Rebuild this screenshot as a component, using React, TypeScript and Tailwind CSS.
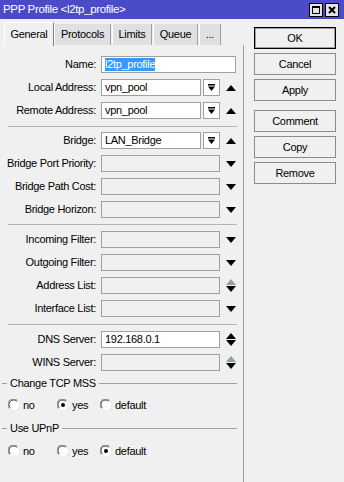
import React from "react";

const F = "font-['Liberation_Sans',Arial,sans-serif]";

function DropBtn() {
  return (
    <div className="w-[17px] h-[17px] ml-[2px] border border-[#a0a0a0] bg-white flex items-center justify-center shrink-0">
      <svg width="9" height="9" viewBox="0 0 9 9">
        <rect x="1" y="1" width="7" height="1.5" fill="#000" />
        <polygon points="1,3.5 8,3.5 4.5,8" fill="#000" />
      </svg>
    </div>
  );
}

function Up({ color = "#000" }: { color?: string }) {
  return (
    <svg width="10" height="6" viewBox="0 0 10 6">
      <polygon points="5,0 10,6 0,6" fill={color} />
    </svg>
  );
}
function Down({ color = "#000" }: { color?: string }) {
  return (
    <svg width="10" height="6" viewBox="0 0 10 6">
      <polygon points="0,0 10,0 5,6" fill={color} />
    </svg>
  );
}

function ArrowCell({ kind }: { kind: "up" | "down" | "updown" | "grayup" | "none" }) {
  return (
    <div className="w-[19px] h-[17px] flex flex-col items-center justify-center shrink-0 ml-[1px]">
      {kind === "up" && <Up />}
      {kind === "down" && <Down />}
      {kind === "updown" && (
        <div className="flex flex-col gap-[1px]">
          <Up />
          <Down />
        </div>
      )}
      {kind === "grayup" && (
        <div className="flex flex-col gap-[1px]">
          <Up color="#98a298" />
          <Down />
        </div>
      )}
    </div>
  );
}

function Row({ label, children }: { label: string; children: React.ReactNode }) {
  return (
    <div className="flex items-center h-[23px]">
      <div className="w-[97px] text-right whitespace-nowrap text-black shrink-0 pr-[1px]">{label}</div>
      <div className="ml-[4px] flex items-center">{children}</div>
    </div>
  );
}

function Input({ value, w, disabled, selected }: { value?: string; w: number; disabled?: boolean; selected?: boolean }) {
  return (
    <div
      className={
        "h-[17px] border border-[#a0a0a0] flex items-center px-[3px] shrink-0 " +
        (disabled ? "bg-[#f0f0f0]" : "bg-white")
      }
      style={{ width: w }}
    >
      {selected ? (
        <span className="bg-[#3399ff] text-white leading-[13px]">{value}</span>
      ) : (
        <span className="leading-[13px]">{value}</span>
      )}
    </div>
  );
}

function Sep({ mt, mb }: { mt: string; mb: string }) {
  return <div className={"ml-[8px] w-[229px] h-px bg-[#b4b4b4] " + mt + " " + mb} />;
}

function Radio({ checked, label }: { checked?: boolean; label: string }) {
  return (
    <div className="flex items-center gap-[3px]">
      <svg width="12" height="12" viewBox="0 0 12 12">
        <circle cx="6" cy="6" r="5.5" fill="#fff" />
        <path d="M1.5 9.5 A5.5 5.5 0 0 1 9.5 1.5" stroke="#808080" strokeWidth="1" fill="none" />
        <path d="M2.3 8.8 A4.5 4.5 0 0 1 8.8 2.3" stroke="#404040" strokeWidth="1" fill="none" />
        <path d="M10.5 2.5 A5.5 5.5 0 0 1 2.5 10.5" stroke="#e0e0e0" strokeWidth="1" fill="none" />
        {checked && <circle cx="6" cy="6" r="2" fill="#000" />}
      </svg>
      <span>{label}</span>
    </div>
  );
}

function GroupHeader({ label }: { label: string }) {
  return (
    <div className="flex items-center h-[18px]">
      <div className="w-[5px] h-px bg-[#a0a0a0] ml-[2px]" />
      <span className="px-[3px] whitespace-nowrap">{label}</span>
      <div className="flex-1 h-px bg-[#a0a0a0] mr-[6px]" />
    </div>
  );
}

function Btn({ label, def }: { label: string; def?: boolean }) {
  return (
    <div
      className={
        "w-[82px] h-[22px] flex items-center justify-center bg-[#f0f0f0] " +
        (def ? "border border-black shadow-[inset_0_0_0_1px_#a0a0a0]" : "border border-[#8c8c8c]")
      }
    >
      {label}
    </div>
  );
}

export default function App() {
  return (
    <div className={"w-[344px] h-[482px] bg-[#f0f0f0] overflow-hidden text-[11px] tracking-[-0.3px] text-black flex flex-col " + F}>
      {/* Title bar */}
      <div className="h-[19px] bg-[#4b4bc8] flex items-center pl-[3px] pr-[5px] shrink-0">
        <span className="text-white text-[11.5px] tracking-[-0.35px] leading-none flex-1">PPP Profile &lt;l2tp_profile&gt;</span>
        <div className="flex gap-[2px]">
          <div className="w-[14px] h-[14px] bg-[#e4e4e4] border border-black flex items-center justify-center">
            <div className="w-[8px] h-[8px] border border-black border-t-2" />
          </div>
          <div className="w-[14px] h-[14px] bg-[#e4e4e4] border border-black flex items-center justify-center">
            <svg width="8" height="8" viewBox="0 0 8 8">
              <path d="M1 1 L7 7 M7 1 L1 7" stroke="#000" strokeWidth="2" />
            </svg>
          </div>
        </div>
      </div>

      <div className="flex flex-1">
        {/* Left column */}
        <div className="w-[244px] flex flex-col shrink-0">
          {/* Tabs */}
          <div className="flex items-end h-[26px] pl-[4px]">
            <div className="w-[50px] h-[24px] bg-[#f0f0f0] border-l border-t border-white border-r border-r-[#808080] flex items-center justify-center relative top-[1px]">
              General
            </div>
            <div className="w-[57px] h-[21px] bg-[#e0e0e0] border-l border-white border-r border-r-[#a0a0a0] flex items-center justify-center">
              Protocols
            </div>
            <div className="w-[40px] h-[21px] ml-[1px] bg-[#e0e0e0] border-l border-white border-r border-r-[#a0a0a0] flex items-center justify-center">
              Limits
            </div>
            <div className="w-[45px] h-[21px] ml-[1px] bg-[#e0e0e0] border-l border-white border-r border-r-[#a0a0a0] flex items-center justify-center">
              Queue
            </div>
            <div className="w-[22px] h-[21px] ml-[1px] bg-[#e0e0e0] border-l border-white border-r border-r-[#a0a0a0] flex items-center justify-center">
              ...
            </div>
          </div>

          {/* Panel */}
          <div className="flex-1 border-r border-[#a0a0a0] pt-[8px]">
            <Row label="Name:">
              <Input value="l2tp_profile" w={135} selected />
            </Row>
            <Row label="Local Address:">
              <Input value="vpn_pool" w={100} />
              <DropBtn />
              <ArrowCell kind="up" />
            </Row>
            <Row label="Remote Address:">
              <Input value="vpn_pool" w={100} />
              <DropBtn />
              <ArrowCell kind="up" />
            </Row>
            <Sep mt="mt-[4px]" mb="mb-[2px]" />
            <Row label="Bridge:">
              <Input value="LAN_Bridge" w={100} />
              <DropBtn />
              <ArrowCell kind="up" />
            </Row>
            <Row label="Bridge Port Priority:">
              <Input w={119} disabled />
              <ArrowCell kind="down" />
            </Row>
            <Row label="Bridge Path Cost:">
              <Input w={119} disabled />
              <ArrowCell kind="down" />
            </Row>
            <Row label="Bridge Horizon:">
              <Input w={119} disabled />
              <ArrowCell kind="down" />
            </Row>
            <Sep mt="mt-[3px]" mb="mb-[3px]" />
            <Row label="Incoming Filter:">
              <Input w={119} disabled />
              <ArrowCell kind="down" />
            </Row>
            <Row label="Outgoing Filter:">
              <Input w={119} disabled />
              <ArrowCell kind="down" />
            </Row>
            <Row label="Address List:">
              <Input w={119} disabled />
              <ArrowCell kind="grayup" />
            </Row>
            <Row label="Interface List:">
              <Input w={119} disabled />
              <ArrowCell kind="down" />
            </Row>
            <Sep mt="mt-[4px]" mb="mb-[3px]" />
            <Row label="DNS Server:">
              <Input value="192.168.0.1" w={119} />
              <ArrowCell kind="updown" />
            </Row>
            <Row label="WINS Server:">
              <Input w={119} disabled />
              <ArrowCell kind="grayup" />
            </Row>
            <GroupHeader label="Change TCP MSS" />
            <div className="h-[26px] flex items-center pl-[8px]">
              <div className="w-[49px]">
                <Radio label="no" />
              </div>
              <div className="w-[43px]">
                <Radio label="yes" checked />
              </div>
              <Radio label="default" />
            </div>
            <div className="h-[1px]" />
            <GroupHeader label="Use UPnP" />
            <div className="h-[28px] flex items-center pl-[8px]">
              <div className="w-[49px]">
                <Radio label="no" />
              </div>
              <div className="w-[43px]">
                <Radio label="yes" />
              </div>
              <Radio label="default" checked />
            </div>
          </div>
        </div>

        {/* Right column */}
        <div className="flex flex-col pl-[10px] pt-[8px]">
          <div className="flex flex-col gap-[4px]">
            <Btn label="OK" def />
            <Btn label="Cancel" />
            <Btn label="Apply" />
          </div>
          <div className="flex flex-col gap-[4px] mt-[9px]">
            <Btn label="Comment" />
            <Btn label="Copy" />
            <Btn label="Remove" />
          </div>
        </div>
      </div>
    </div>
  );
}
